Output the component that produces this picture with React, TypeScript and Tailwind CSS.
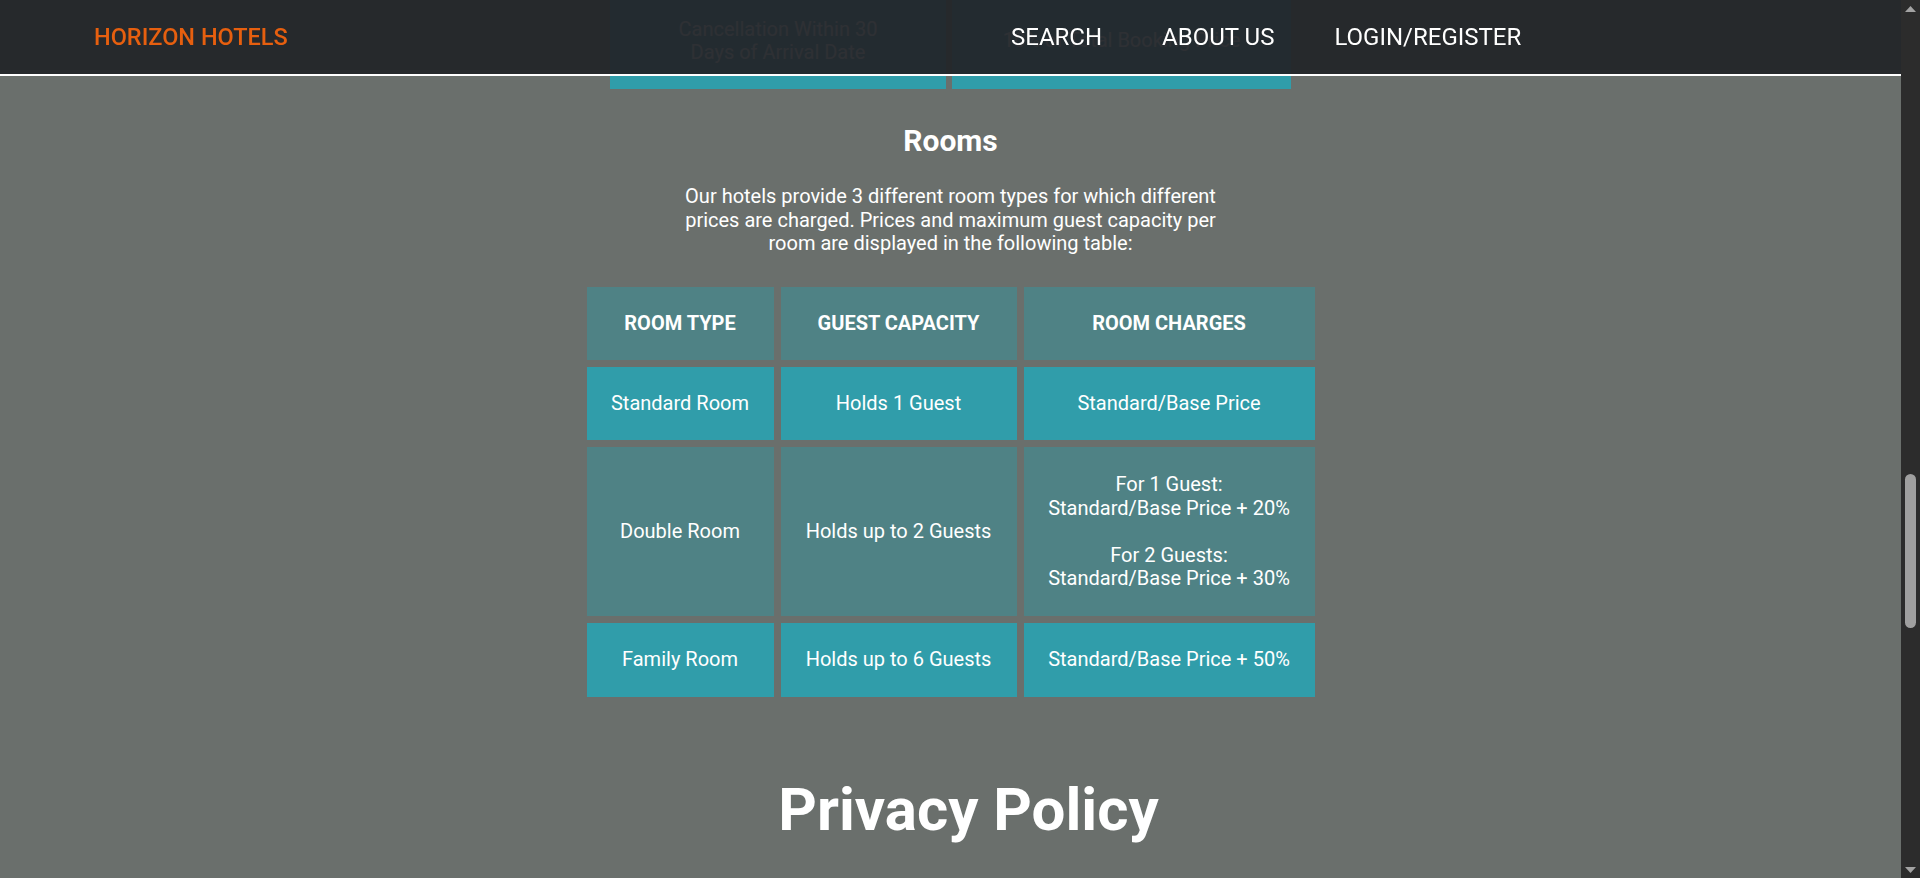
import { useLayoutEffect, useRef } from 'react'

const cancellation = [
  { period: 'Cancellation Within 7 Days of Arrival Date', fee: '50% of Total Booking Price', dark: false },
  { period: 'Cancellation Within 14 Days of Arrival Date', fee: '25% of Total Booking Price', dark: true },
  { period: 'Cancellation Within 30 Days of Arrival Date', fee: '10% of Total Booking Price', dark: false },
]

const rooms = [
  { type: 'Standard Room', capacity: 'Holds 1 Guest', charges: ['Standard/Base Price'], dark: false },
  {
    type: 'Double Room',
    capacity: 'Holds up to 2 Guests',
    charges: ['For 1 Guest:', 'Standard/Base Price + 20%', '', 'For 2 Guests:', 'Standard/Base Price + 30%'],
    dark: true,
  },
  { type: 'Family Room', capacity: 'Holds up to 6 Guests', charges: ['Standard/Base Price + 50%'], dark: false },
]

function Cell({ dark, bold, className = '', children }: { dark?: boolean; bold?: boolean; className?: string; children: React.ReactNode }) {
  return (
    <div
      className={`flex items-center justify-center text-center px-3 py-[25px] ${dark ? 'bg-[#4f8285]' : 'bg-[#309daa]'} ${
        bold ? 'font-bold' : ''
      } ${className}`}
    >
      <div>{children}</div>
    </div>
  )
}

function Header() {
  return (
    <header className="sticky top-0 z-10 flex h-[76px] items-center border-b-2 border-white bg-[#232529]/95 pl-[94px]">
      <div className="w-[917px] shrink-0 text-[23.5px] font-medium leading-[28px] text-[#e65f0f]">HORIZON HOTELS</div>
      <nav className="flex gap-[60px] text-[24px] leading-[28px] text-white">
        <a>SEARCH</a>
        <a>ABOUT US</a>
        <a>LOGIN/REGISTER</a>
      </nav>
    </header>
  )
}

function Scrollbar() {
  return (
    <aside className="flex w-[19px] shrink-0 flex-col bg-[#2c2c2c]">
      <div className="flex h-[17px] items-center justify-center">
        <svg width="11" height="6" viewBox="0 0 11 6">
          <path d="M5.5 0L11 6H0z" fill="#a3a3a3" />
        </svg>
      </div>
      <div className="h-[457px]" />
      <div className="mx-auto h-[154px] w-[11px] rounded-full bg-[#9f9f9f]" />
      <div className="flex-1" />
      <div className="flex h-[17px] items-center justify-center">
        <svg width="11" height="6" viewBox="0 0 11 6">
          <path d="M0 0H11L5.5 6z" fill="#a3a3a3" />
        </svg>
      </div>
    </aside>
  )
}

export default function App() {
  const scrollRef = useRef<HTMLDivElement>(null)
  const roomsRef = useRef<HTMLElement>(null)

  useLayoutEffect(() => {
    const c = scrollRef.current
    const r = roomsRef.current
    if (c && r) c.scrollTop = r.offsetTop - 89
  }, [])

  return (
    <div className="flex h-screen bg-[#6a6f6c] font-['Roboto',sans-serif] text-[20px] leading-[23.4px] text-white">
      <div ref={scrollRef} className="relative min-w-0 flex-1 overflow-y-scroll [scrollbar-width:none]">
        <Header />

        <main>
          {/* About */}
          <section className="mx-auto flex max-w-[900px] flex-col items-center pt-[120px] text-center">
            <h1 className="text-[60px] font-bold leading-[70px]">About Us</h1>
            <p className="mt-10 max-w-[700px]">
              Horizon Hotels is a chain of luxury hotels located in cities all around the country. We pride ourselves on
              offering our guests comfortable rooms, friendly service and great value for money.
            </p>
            <p className="mt-6 max-w-[700px]">
              Whether you are travelling for business or leisure, our hotels are the perfect place to stay. Book
              directly with us to get the best available rates.
            </p>
          </section>

          <section className="mx-auto flex flex-col items-center pt-[90px] text-center">
            <h2 className="text-[30px] font-bold leading-[35px]">Booking</h2>
            <p className="mt-[27px] max-w-[550px]">
              Bookings can be made up to 3 months in advance. Bookings made 80-90 days in advance receive a 20%
              discount, 60-79 days in advance 10%, 45-59 days in advance 5%.
            </p>
          </section>

          {/* Cancellation */}
          <section className="mx-auto flex flex-col items-center pt-[90px] text-center">
            <h2 className="text-[30px] font-bold leading-[35px]">Cancellation Policy</h2>
            <p className="mt-[27px] max-w-[550px]">
              Cancellations are free of charge up to 30 days before the arrival date. After that, a fee is charged as
              shown in the following table:
            </p>
            <div className="mt-[31px] grid grid-cols-[336px_339px] gap-[6px]">
              <Cell dark bold>CANCELLATION PERIOD</Cell>
              <Cell dark bold>CANCELLATION FEE</Cell>
              {cancellation.map((c) => (
                <div key={c.period} className="contents">
                  <Cell dark={c.dark} className="px-[60px]">{c.period}</Cell>
                  <Cell dark={c.dark}>{c.fee}</Cell>
                </div>
              ))}
            </div>
          </section>

          {/* Rooms */}
          <section ref={roomsRef} className="mx-auto flex flex-col items-center pt-[34px] text-center">
            <h2 className="text-[30px] font-bold leading-[35px]">Rooms</h2>
            <p className="mt-[27px] max-w-[550px]">
              Our hotels provide 3 different room types for which different prices are charged. Prices and maximum
              guest capacity per room are displayed in the following table:
            </p>
            <div className="mt-[31px] grid grid-cols-[187px_236px_291px] gap-[7px]">
              <Cell dark bold>ROOM TYPE</Cell>
              <Cell dark bold>GUEST CAPACITY</Cell>
              <Cell dark bold>ROOM CHARGES</Cell>
              {rooms.map((r) => (
                <div key={r.type} className="contents">
                  <Cell dark={r.dark}>{r.type}</Cell>
                  <Cell dark={r.dark}>{r.capacity}</Cell>
                  <Cell dark={r.dark} className={r.charges.length > 1 ? 'py-[26px]' : ''}>
                    {r.charges.map((line, i) => (
                      <span key={i} className="block">
                        {line || '\u00a0'}
                      </span>
                    ))}
                  </Cell>
                </div>
              ))}
            </div>
          </section>

          {/* Privacy */}
          <section className="mx-auto flex flex-col items-center pt-[78px] pb-[120px] text-center">
            <h1 className="pl-[36px] text-[60px] font-bold leading-[70px]">Privacy Policy</h1>
            <p className="mt-10 max-w-[700px]">
              We only collect the personal information that is needed to process your booking, such as your name, email
              address and payment details.
            </p>
            <p className="mt-6 max-w-[700px]">
              Your information is stored securely and is never shared with third parties without your consent, except
              where required by law.
            </p>
            <p className="mt-6 max-w-[700px]">
              You can request a copy of the information we hold about you, or ask for it to be deleted, at any time by
              contacting us.
            </p>
          </section>
        </main>
      </div>
      <Scrollbar />
    </div>
  )
}
